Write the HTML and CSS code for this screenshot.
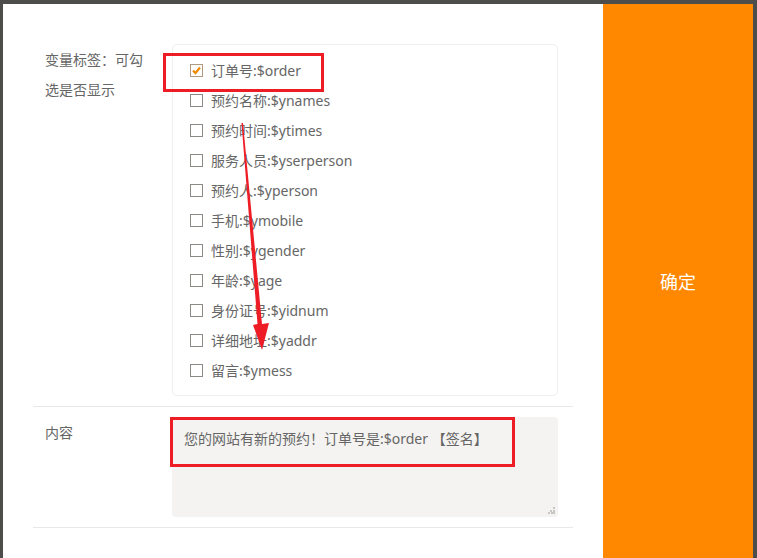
FILE: index.html
```html
<!DOCTYPE html>
<html>
	<head>
		<meta charset="utf-8">
		<title>短信设置</title>
		<link rel="stylesheet" href="styles.css">
	</head>
	<body>
		<div class="frame">
			<div class="panel">
				<div class="form">
					<div class="row row-vars">
						<div class="label">变量标签：可勾选是否显示</div>
						<ul class="checks">
							<li><span class="box checked"><svg width="11" height="11" viewBox="0 0 11 11"><path d="M2 5.5 L4.5 8 L9 2.5" fill="none" stroke="#f18a00" stroke-width="2.2"/></svg></span>订单号:$order</li>
							<li><span class="box"></span>预约名称:$ynames</li>
							<li><span class="box"></span>预约时间:$ytimes</li>
							<li><span class="box"></span>服务人员:$yserperson</li>
							<li><span class="box"></span>预约人:$yperson</li>
							<li><span class="box"></span>手机:$ymobile</li>
							<li><span class="box"></span>性别:$ygender</li>
							<li><span class="box"></span>年龄:$yage</li>
							<li><span class="box"></span>身份证号:$yidnum</li>
							<li><span class="box"></span>详细地址:$yaddr</li>
							<li><span class="box"></span>留言:$ymess</li>
						</ul>
					</div>
					<div class="row row-content">
						<div class="label">内容</div>
						<div class="textarea">您的网站有新的预约！订单号是:$order 【签名】<span class="grip"></span></div>
					</div>
				</div>
			</div>
			<div class="confirm">确定</div>
			<!-- 标注 -->
			<div class="mark mark-order"></div>
			<div class="mark mark-content"></div>
			<svg class="arrow" width="757" height="558" viewBox="0 0 757 558">
				<polygon points="241.5,123 243,123 262,324 269,323 262,350 253,325 257.5,324" fill="#ee1c25"/>
			</svg>
		</div>
	</body>
</html>
```

FILE: styles.css
```css
*{
	padding: 0;
	margin: 0;
	box-sizing: border-box;
}
ul{
	list-style: none;
}
html,body{
	width: 100%;
	height: 100%;
}
body{
	background-color: #4d4d4b;
	font-family: "Noto Sans", "Noto Sans CJK SC", sans-serif;
	font-size: 14px;
	color: #666;
	overflow: hidden;
}
.frame{
	position: relative;
	display: flex;
	height: 558px;
	padding: 4px 4px 0 3px;
}
.panel{
	width: 600px;
	height: 100%;
	background-color: #fff;
}
.form{
	padding: 40px 30px 0 30px;
}
.row{
	display: flex;
	border-bottom: 1px solid #e8e8e8;
}
.row-vars{
	padding-bottom: 10px;
}
.row-content{
	padding: 10px 0;
}
.label{
	width: 139px;
	padding: 1px 27px 0 12px;
	line-height: 30px;
	color: #666;
}
.checks{
	width: 386px;
	border: 1px solid #efefef;
	border-radius: 5px;
	padding: 10px 0 10px 17px;
}
.checks li{
	display: flex;
	align-items: center;
	height: 30px;
	color: #666;
}
.box{
	display: inline-flex;
	align-items: center;
	justify-content: center;
	width: 13px;
	height: 13px;
	border: 1px solid #8d8a86;
	margin-right: 8px;
	background-color: #fff;
}
.box.checked{
	border-color: #b09a82;
}
.textarea{
	position: relative;
	width: 386px;
	height: 100px;
	background-color: #f4f3f1;
	border-radius: 4px;
	padding: 12px 12px;
	line-height: 20px;
	color: #666;
}
.grip{
	position: absolute;
	right: 3px;
	bottom: 3px;
	width: 7px;
	height: 7px;
	background:
		linear-gradient(#c8c6c2, #c8c6c2) 5px 0 / 2px 2px no-repeat,
		linear-gradient(#c8c6c2, #c8c6c2) 2px 2.5px / 2px 2px no-repeat,
		linear-gradient(#c8c6c2, #c8c6c2) 5px 2.5px / 2px 2px no-repeat,
		linear-gradient(#c8c6c2, #c8c6c2) 0 5px / 2px 2px no-repeat,
		linear-gradient(#c8c6c2, #c8c6c2) 2.5px 5px / 2px 2px no-repeat,
		linear-gradient(#c8c6c2, #c8c6c2) 5px 5px / 2px 2px no-repeat;
}
.confirm{
	width: 150px;
	height: 100%;
	background-color: #ff8800;
	color: #fff;
	font-size: 18px;
	display: flex;
	align-items: center;
	justify-content: center;
}
.mark{
	position: absolute;
	border: 3px solid #ee1c25;
}
.mark-order{
	left: 163px;
	top: 53px;
	width: 161px;
	height: 39px;
}
.mark-content{
	left: 170px;
	top: 417px;
	width: 345px;
	height: 50px;
}
.arrow{
	position: absolute;
	left: 0;
	top: 0;
	pointer-events: none;
}
```
